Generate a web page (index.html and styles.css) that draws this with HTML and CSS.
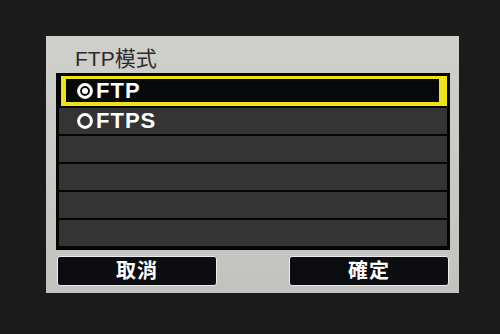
FILE: index.html
```html
<!DOCTYPE html>
<html lang="zh-Hant">
<head>
    <meta charset="UTF-8">
    <title>FTP模式</title>
    <link rel="stylesheet" href="styles.css">
</head>
<body>
    <div class="screen">
        <!-- 設定面板 -->
        <div class="panel">
            <div class="panel-title">FTP模式</div>

            <!-- 選項清單 -->
            <div class="option-list">
                <div class="option selected">
                    <svg class="radio" viewBox="0 0 16 16">
                        <circle cx="8" cy="8" r="6.4" fill="none" stroke="#fff" stroke-width="3"/>
                        <circle cx="8" cy="8" r="3" fill="#fff"/>
                    </svg>
                    <span>FTP</span>
                </div>
                <div class="option">
                    <svg class="radio" viewBox="0 0 16 16">
                        <circle cx="8" cy="8" r="6.4" fill="none" stroke="#fff" stroke-width="3"/>
                    </svg>
                    <span>FTPS</span>
                </div>
                <div class="option"></div>
                <div class="option"></div>
                <div class="option"></div>
                <div class="option"></div>
            </div>

            <!-- 按鈕 -->
            <div class="buttons">
                <div class="btn">取消</div>
                <div class="btn">確定</div>
            </div>
        </div>
    </div>
</body>
</html>
```

FILE: styles.css
```css
/* 全局样式 */
body {
    margin: 0;
    background-color: #1b1b1b;
    font-family: 'Liberation Sans', 'Noto Sans CJK TC', sans-serif;
}

.screen {
    width: 500px;
    height: 334px;
    padding: 36px 0 0 46px;
    box-sizing: border-box;
}

/* 面板 */
.panel {
    width: 413px;
    height: 257px;
    background: linear-gradient(180deg, #cfcfcb 0%, #c8c8c5 60%, #c2c2bf 100%);
    padding: 0 9px 0 10px;
    box-sizing: border-box;
}

.panel-title {
    height: 37px;
    padding: 11px 0 0 19px;
    box-sizing: border-box;
    font-size: 21px;
    line-height: 24px;
    color: #2b2b2b;
    white-space: nowrap;
}

/* 选项清单 */
.option-list {
    background-color: #050505;
    padding: 3px 3px 4px 3px;
    display: flex;
    flex-direction: column;
    gap: 2px;
}

.option {
    height: 26px;
    background-color: #343434;
    display: flex;
    align-items: center;
    padding-left: 18px;
    color: #fff;
    font-weight: bold;
    font-size: 22px;
    letter-spacing: 1px;
}

.option.selected {
    height: 30px;
    box-sizing: border-box;
    background-color: #08090b;
    border: 3px solid #ede316;
    border-left-width: 5px;
    border-right-width: 8px;
    border-bottom-width: 4px;
    padding-left: 11px;
    margin-left: 2px;
}

.radio {
    width: 16px;
    height: 16px;
    margin-right: 3px;
    flex-shrink: 0;
}

/* 按钮 */
.buttons {
    display: flex;
    justify-content: space-between;
    margin-top: 6px;
    padding-right: 1px;
}

.btn {
    width: 160px;
    height: 30px;
    box-sizing: border-box;
    background-color: #0b0d11;
    border: 1px solid #ececec;
    border-radius: 3px;
    color: #fff;
    font-weight: bold;
    font-size: 20px;
    line-height: 28px;
    text-align: center;
    letter-spacing: 1px;
}

.btn:first-child {
    margin-left: 1px;
}
```
